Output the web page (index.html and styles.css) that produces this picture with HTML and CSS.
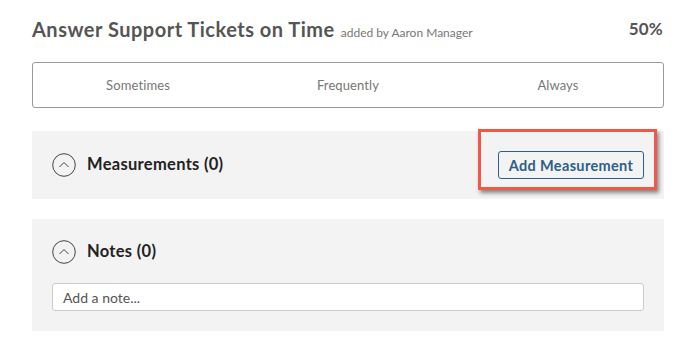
FILE: index.html
```html
<!DOCTYPE html>
<html>
<head>
<meta charset="utf-8">
<link rel="stylesheet" href="styles.css">
</head>
<body>
<div class="page">
  <div class="header">
    <div class="title-wrap">
      <span class="title">Answer Support Tickets on Time</span>
      <span class="added">added by Aaron Manager</span>
    </div>
    <div class="pct">50%</div>
  </div>
  <div class="segments">
    <div class="seg">Sometimes</div>
    <div class="seg">Frequently</div>
    <div class="seg">Always</div>
  </div>
  <div class="panel panel-meas">
    <div class="panel-head">
      <svg class="toggle" width="24" height="24" viewBox="0 0 24 24"><circle cx="12" cy="12" r="11.3" fill="none" stroke="#444" stroke-width="1"/><path d="M7.5 14 L12 9.5 L16.5 14" fill="none" stroke="#444" stroke-width="1"/></svg>
      <span class="panel-title">Measurements (0)</span>
    </div>
    <div class="btn-wrap">
      <button class="btn">Add Measurement</button>
      <div class="highlight"></div>
    </div>
  </div>
  <div class="panel panel-notes">
    <div class="panel-head">
      <svg class="toggle" width="24" height="24" viewBox="0 0 24 24"><circle cx="12" cy="12" r="11.3" fill="none" stroke="#444" stroke-width="1"/><path d="M7.5 14 L12 9.5 L16.5 14" fill="none" stroke="#444" stroke-width="1"/></svg>
      <span class="panel-title">Notes (0)</span>
    </div>
    <input class="note" type="text" placeholder="Add a note...">
  </div>
</div>
</body>
</html>
```
FILE: styles.css
```css
html, body { margin: 0; padding: 0; background: #fff; }
body { font-family: Lato, "Open Sans", sans-serif; }
.page { width: 632px; padding: 17px 0 0 32px; }
.header { display: flex; justify-content: space-between; align-items: flex-start; height: 45px; }
.title-wrap { display: flex; align-items: baseline; gap: 6px; }
.title { font-size: 20px; font-weight: 700; color: #555; letter-spacing: 0.5px; }
.added { font-size: 12px; color: #777; }
.pct { font-size: 17px; font-weight: 700; color: #555; padding-right: 1px; padding-top: 1px; letter-spacing: 0.2px; }
.segments { display: grid; grid-template-columns: 1fr 1fr 1fr; border: 1px solid #999; border-radius: 3px; box-sizing: border-box; height: 46px; align-items: center; }
.seg { text-align: center; font-size: 13px; color: #777; letter-spacing: 0.1px; }
.panel { background: #f3f3f3; margin-top: 23px; box-sizing: border-box; }
.panel-meas { height: 68px; display: flex; justify-content: space-between; align-items: center; padding: 0 20px; }
.panel-notes { height: 112px; margin-top: 20px; padding: 21px 20px 0; }
.panel-head { display: flex; align-items: center; gap: 11px; }
.toggle { display: block; }
.panel-title { font-size: 16.5px; font-weight: 700; color: #222; letter-spacing: 0.3px; margin-bottom: 3px; }
.btn-wrap { position: relative; }
.btn { font-family: inherit; font-size: 14.5px; font-weight: 700; color: #2d5f88; background: transparent; border: 1px solid #2d5f88; border-radius: 3px; width: 146px; height: 28px; padding: 0; display: block; letter-spacing: 0.35px; }
.highlight { position: absolute; left: -20px; top: -22px; width: 173px; height: 55px; border: 3px solid #f4574a; box-shadow: 2px 3px 4px rgba(0,0,0,0.45); pointer-events: none; }
.note { display: block; box-sizing: border-box; width: 592px; height: 28px; margin-top: 19px; border: 1px solid #ccc; border-radius: 3px; padding: 0 10px; font-family: inherit; font-size: 14px; background: #fff; outline: none; }
.note::placeholder { color: #555; }
```
